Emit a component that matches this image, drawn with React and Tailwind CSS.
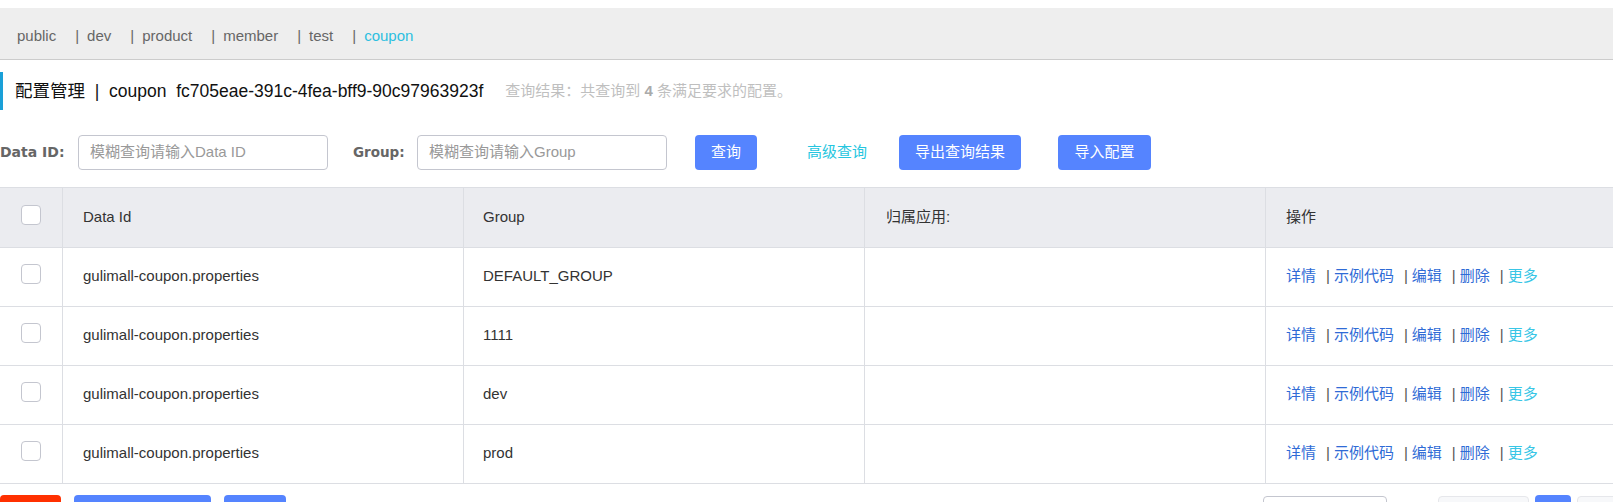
import React from 'react';

const font = { fontFamily: '"Liberation Sans", "Noto Sans CJK SC", sans-serif' };
const labelFont = { fontFamily: '"DejaVu Sans", sans-serif' };

const namespaces = ['public', 'dev', 'product', 'member', 'test', 'coupon'];

const rows = [
  { dataId: 'gulimall-coupon.properties', group: 'DEFAULT_GROUP' },
  { dataId: 'gulimall-coupon.properties', group: '1111' },
  { dataId: 'gulimall-coupon.properties', group: 'dev' },
  { dataId: 'gulimall-coupon.properties', group: 'prod' },
];

function Checkbox() {
  return <div className="w-[20px] h-[20px] rounded-[4px] border border-[#c4c6cf] bg-white -mt-[6px]" />;
}

function Actions() {
  const sep = <span className="ml-[10px] mr-[4px] text-[#555]">|</span>;
  return (
    <div className="flex items-center">
      <a className="text-[#2f6bd6]">详情</a>
      {sep}
      <a className="text-[#2f6bd6]">示例代码</a>
      {sep}
      <a className="text-[#2f6bd6]">编辑</a>
      {sep}
      <a className="text-[#2f6bd6]">删除</a>
      {sep}
      <a className="text-[#39c6e6]">更多</a>
    </div>
  );
}

export default function App() {
  return (
    <div className="w-[1613px] h-[502px] overflow-hidden bg-white text-[#333] text-[15px]" style={font}>
      {/* namespace bar */}
      <div className="mt-[8px] h-[52px] bg-[#eeeeee] border-b border-[#cccccc] flex items-center pl-[17px] pt-[5px] text-[#666]">
        {namespaces.map((ns, i) => (
          <span key={ns} className="flex items-center mr-[19px]">
            {i > 0 && <span className="mr-[8px]">|</span>}
            <span className={ns === 'coupon' ? 'text-[#2cbfe0]' : ''}>{ns}</span>
          </span>
        ))}
      </div>

      {/* title */}
      <div className="mt-[12px] h-[38px] border-l-[3px] border-[#1aa0d8] flex items-center pl-[12px]">
        <span className="text-[17.5px] text-[#111]">配置管理&nbsp;&nbsp;|&nbsp;&nbsp;coupon&nbsp;&nbsp;fc705eae-391c-4fea-bff9-90c97963923f</span>
        <span className="ml-[22px] text-[15px] text-[#bfbfbf]">
          查询结果：共查询到 <b className="text-[#aaa]">4</b> 条满足要求的配置。
        </span>
      </div>

      {/* search form */}
      <div className="mt-[25px] flex items-center h-[35px]">
        <label className="shrink-0 text-[14px] font-bold text-[#666] w-[65px]" style={labelFont}>Data ID:</label>
        <div className="shrink-0 ml-[13px] w-[250px] h-[35px] border border-[#c4c6cf] rounded-[4px] flex items-center px-[11px] text-[#999]">
          模糊查询请输入Data ID
        </div>
        <label className="shrink-0 ml-[25px] text-[13.5px] font-bold text-[#666] w-[52px]" style={labelFont}>Group:</label>
        <div className="shrink-0 ml-[12px] w-[250px] h-[35px] border border-[#c4c6cf] rounded-[4px] flex items-center px-[11px] text-[#999]">
          模糊查询请输入Group
        </div>
        <button className="shrink-0 ml-[28px] w-[62px] h-[35px] rounded-[4px] bg-[#5584ff] text-white">查询</button>
        <span className="shrink-0 ml-[50px] text-[#26c6e0]">高级查询</span>
        <button className="shrink-0 ml-[32px] w-[122px] h-[35px] rounded-[4px] bg-[#5584ff] text-white">导出查询结果</button>
        <button className="shrink-0 ml-[37px] w-[93px] h-[35px] rounded-[4px] bg-[#5584ff] text-white">导入配置</button>
      </div>

      {/* table */}
      <div className="mt-[17px] border-t border-[#dcdee3]">
        <div className="grid grid-cols-[63px_401px_401px_401px_1fr] h-[60px] bg-[#ebecf0] border-b border-[#dcdee3] text-[#333]">
          <div className="border-r border-[#dcdee3] flex items-center justify-center"><Checkbox /></div>
          <div className="border-r border-[#dcdee3] flex items-center pl-[20px]">Data Id</div>
          <div className="border-r border-[#dcdee3] flex items-center pl-[19px]">Group</div>
          <div className="border-r border-[#dcdee3] flex items-center pl-[21px]">归属应用:</div>
          <div className="flex items-center pl-[20px]">操作</div>
        </div>
        {rows.map((r, i) => (
          <div key={i} className="grid grid-cols-[63px_401px_401px_401px_1fr] h-[59px] border-b border-[#dcdee3] text-[#333]">
            <div className="border-r border-[#dcdee3] flex items-center justify-center"><Checkbox /></div>
            <div className="border-r border-[#dcdee3] flex items-center pl-[20px] pb-[1px]">{r.dataId}</div>
            <div className="border-r border-[#dcdee3] flex items-center pl-[19px] pb-[1px]">{r.group}</div>
            <div className="border-r border-[#dcdee3]" />
            <div className="flex items-center pl-[20px] pb-[1px]"><Actions /></div>
          </div>
        ))}
      </div>

      {/* footer toolbar (partially visible) */}
      <div className="mt-[11px] flex items-start h-[35px]">
        <div className="shrink-0 w-[61px] h-[35px] rounded-[4px] bg-[#ff3000]" />
        <div className="shrink-0 ml-[13px] w-[137px] h-[35px] rounded-[4px] bg-[#5584ff]" />
        <div className="shrink-0 ml-[13px] w-[62px] h-[35px] rounded-[4px] bg-[#5584ff]" />
        <div className="shrink-0 ml-[977px] mt-[1px] w-[124px] h-[34px] rounded-[4px] border border-[#c4c6cf] bg-white" />
        <div className="shrink-0 ml-[51px] mt-[1px] w-[91px] h-[34px] rounded-[4px] border border-[#e6e7eb] bg-[#f7f8fa]" />
        <div className="shrink-0 ml-[6px] w-[36px] h-[35px] rounded-[4px] bg-[#5584ff]" />
        <div className="shrink-0 ml-[6px] mt-[1px] w-[60px] h-[34px] rounded-[4px] border border-[#e6e7eb] bg-[#f7f8fa]" />
      </div>
    </div>
  );
}
